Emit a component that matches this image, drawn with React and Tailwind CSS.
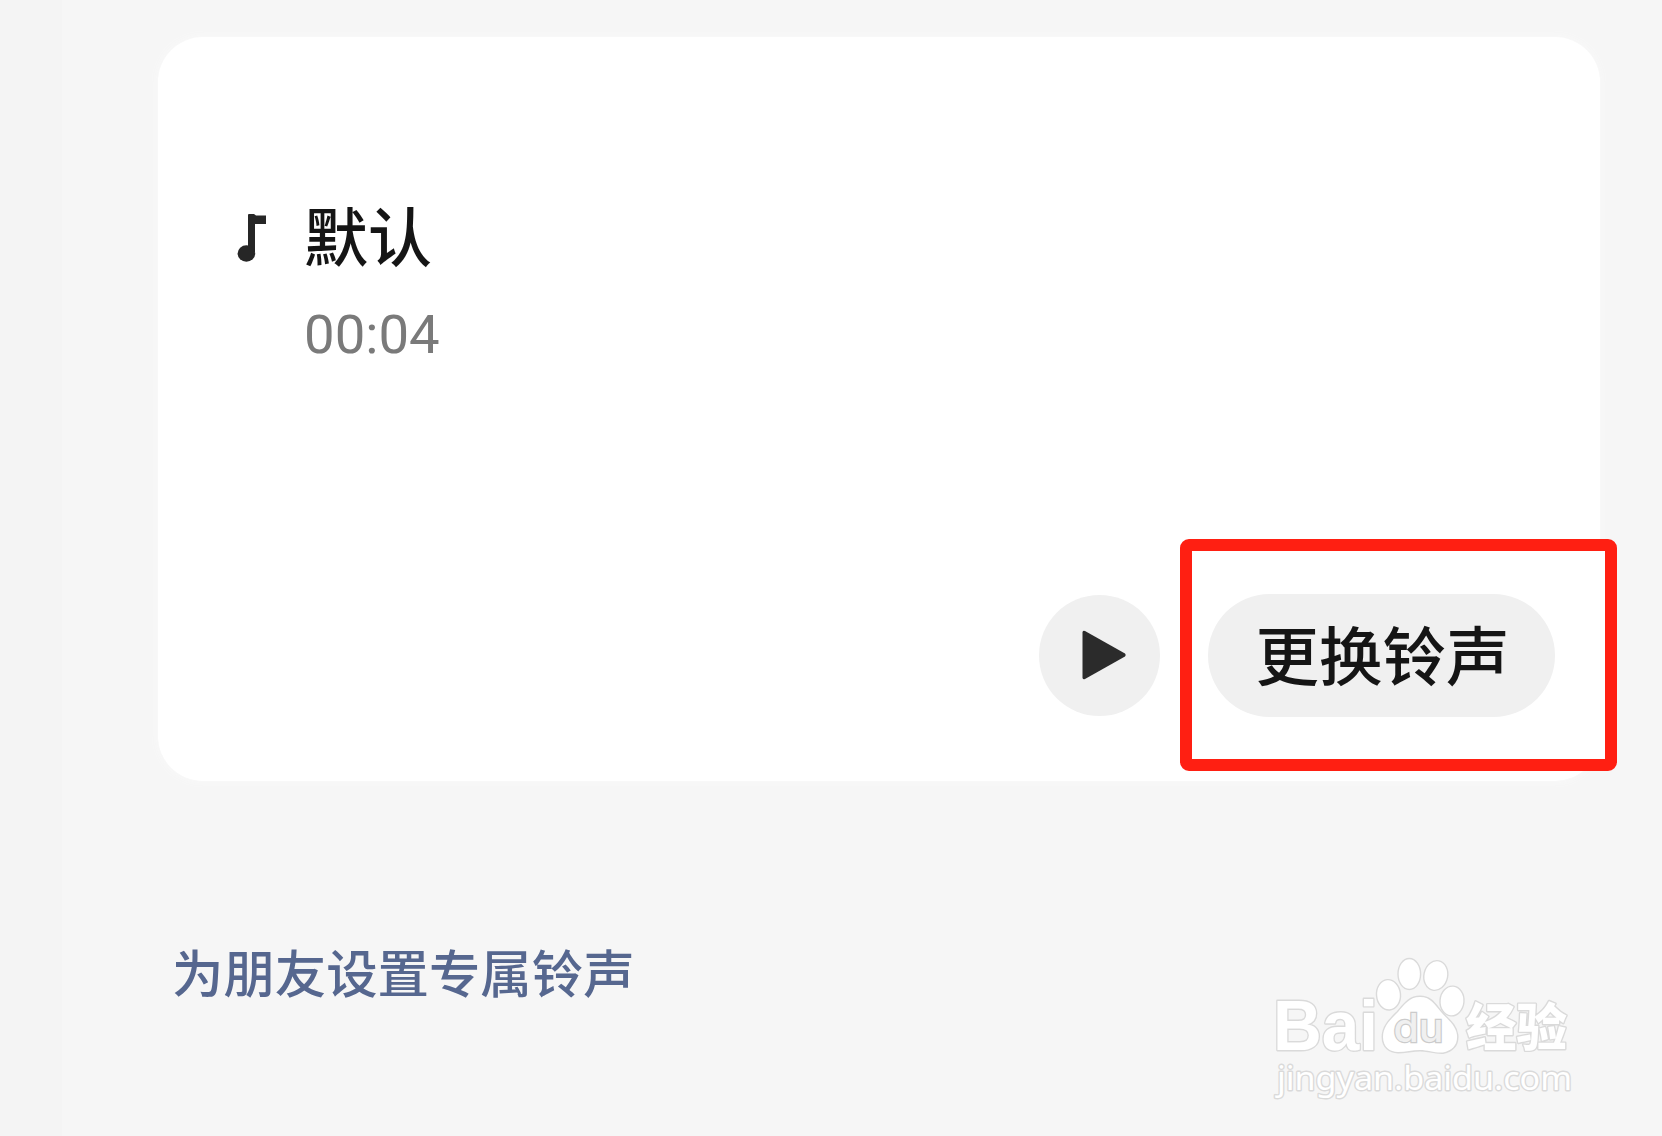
import React from "react";

const cjk = "font-['Noto_Sans_CJK_SC',sans-serif]";

function NoteIcon() {
  return (
    <svg className="h-[50px] w-[30px]" viewBox="0 0 30 50" fill="#262626">
      <path d="M11 1Q11 0 12 0H17L19 1.500H29V10H18V38H11Z" />
      <ellipse cx="9.400" cy="39.500" rx="8.800" ry="8.300" />
    </svg>
  );
}

function TrackInfo() {
  return (
    <div className="flex gap-[37px] pl-[79px] pt-[158px]">
      <div className="pt-[19px]">
        <NoteIcon />
      </div>
      <div className="flex flex-col">
        <span className="h-[76px] text-[64px] font-medium leading-[76px] text-[#151515]">默认</span>
        <span className="mt-[30px] h-[66px] font-[Roboto,sans-serif] text-[54.500px] leading-[66px] text-[#7a7a7a]">00:04</span>
      </div>
    </div>
  );
}

function Actions() {
  return (
    <div className="-mr-[17px] mb-[10px] flex items-center justify-end gap-[20px]">
      <button className="flex h-[121px] w-[121px] items-center justify-center rounded-full bg-[#f0f0f0]" aria-label="播放">
        <svg className="ml-[8px] h-[50px] w-[46px]" viewBox="0 0 46 50" fill="#2b2b2b">
          <path d="M1.500 2.500Q1.500 0 4 1L44 23.500Q45.500 25 44 26.500L4 49Q1.500 50 1.500 47.500Z" />
        </svg>
      </button>
      <div className="flex h-[232px] w-[437px] items-center rounded-[9px] border-[12px] border-[#ff1f12] bg-white pl-[16px]">
        <button className="flex h-[123px] w-[347px] shrink-0 items-center justify-center rounded-full bg-[#f0f0f0] text-[63.500px] font-medium leading-[76px] text-[#151515]">
          <span className="pb-[6px] pl-[2px]">更换铃声</span>
        </button>
      </div>
    </div>
  );
}

function Watermark() {
  const outline = { stroke: "#dadada", strokeWidth: 2.8, paintOrder: "stroke", strokeLinejoin: "round" };
  return (
    <svg className="h-[170px] w-[330px]" viewBox="0 0 330 170" fill="#fff">
      <g {...outline}>
        <text x="13" y="110" fontFamily="Liberation Sans" fontWeight="700" fontSize="70" textLength="105" lengthAdjust="spacingAndGlyphs">Bai</text>
        <ellipse cx="128.500" cy="54.800" rx="11.300" ry="14.500" transform="rotate(-5 128.500 54.800)" />
        <ellipse cx="149.300" cy="34" rx="10.600" ry="14.800" />
        <ellipse cx="175.800" cy="35.500" rx="11.200" ry="14.300" transform="rotate(12 175.800 35.500)" />
        <ellipse cx="192" cy="61" rx="11.300" ry="14.200" transform="rotate(5 192 61)" />
        <path d="M160 57C149 57 144 65 138 72C131 79 123 86 123 97C123 107 130 112 138 112C146 112 152 110 160 110C168 110 174 113 183 112.500C192 111 198 105 197 95C196 85 187 79 181 72C175 65 171 57 160 57Z" />
      </g>
      <text x="133.500" y="102" fontFamily="Inter" fontWeight="500" fontSize="39.500" textLength="50" lengthAdjust="spacingAndGlyphs" fill="#f0f0f0" stroke="#cbcbcb" strokeWidth="2.400" paintOrder="stroke">du</text>
      <text x="206" y="106" fontFamily="Noto Sans CJK SC" fontWeight="900" fontSize="51" textLength="101" lengthAdjust="spacingAndGlyphs" {...outline}>经验</text>
      <text x="17" y="149.500" fontFamily="Noto Sans" fontSize="33.500" textLength="295" lengthAdjust="spacingAndGlyphs" {...outline}>jingyan.baidu.com</text>
    </svg>
  );
}

export default function App() {
  return (
    <div className={`flex h-[1136px] w-[1662px] overflow-hidden bg-[#f6f6f6] ${cjk}`}>
      <div className="w-[62px] shrink-0 bg-[#f4f4f4]" />
      <main className="flex flex-1 flex-col pl-[96px] pt-[37px]">
        <section className="flex h-[744px] w-[1442px] flex-col justify-between rounded-[45px] bg-white shadow-[0_0_8px_1px_#f9f9f9]">
          <TrackInfo />
          <Actions />
        </section>
        <div className="flex items-start justify-between pr-[72px] pt-[156px]">
          <a className="pl-[14px] pt-[1px] text-[51.400px] font-medium leading-[66px] text-[#56678f]">为朋友设置专属铃声</a>
          <div className="pt-[3px]">
            <Watermark />
          </div>
        </div>
      </main>
    </div>
  );
}
